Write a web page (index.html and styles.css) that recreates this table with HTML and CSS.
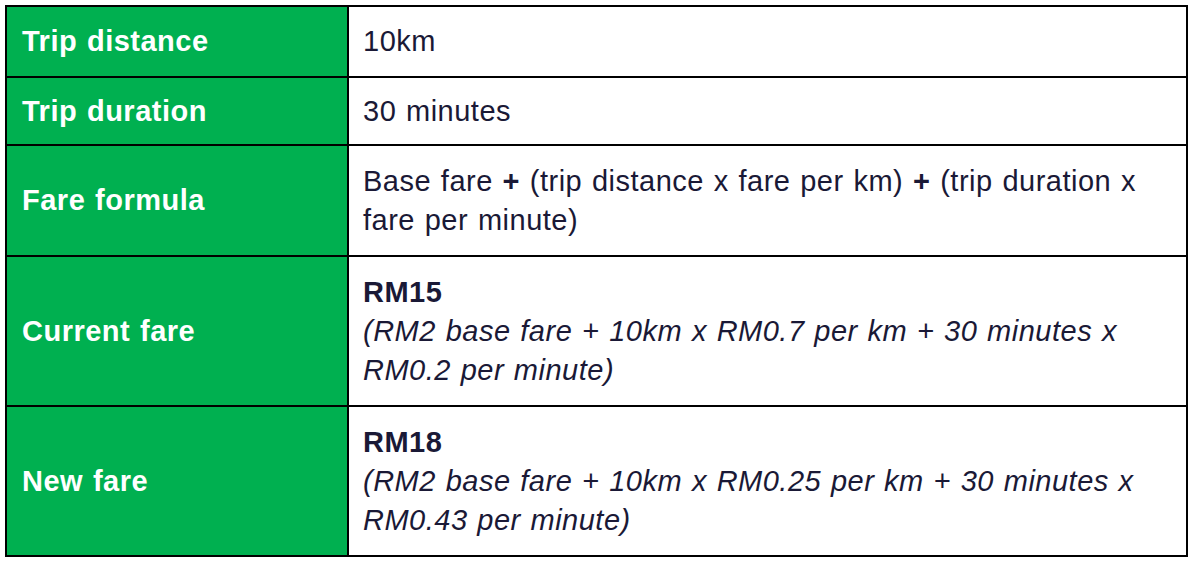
FILE: index.html
```html
<!DOCTYPE html>
<html>
<head>
<meta charset="utf-8">
<link rel="stylesheet" href="styles.css">
</head>
<body>
<table class="fares">
  <tr class="r1">
    <th>Trip distance</th>
    <td>10km</td>
  </tr>
  <tr class="r2">
    <th>Trip duration</th>
    <td>30 minutes</td>
  </tr>
  <tr class="r3">
    <th>Fare formula</th>
    <td>Base fare <b>+</b> (trip distance x fare per km) <b>+</b> (trip duration x fare per minute)</td>
  </tr>
  <tr class="r4">
    <th>Current fare</th>
    <td><b class="amt">RM15</b><br><i>(RM2 base fare + 10km x RM0.7 per km + 30 minutes x RM0.2 per minute)</i></td>
  </tr>
  <tr class="r5">
    <th>New fare</th>
    <td><b class="amt">RM18</b><br><i>(RM2 base fare + 10km x RM0.25 per km + 30 minutes x RM0.43 per minute)</i></td>
  </tr>
</table>
</body>
</html>
```
FILE: styles.css
```css
html, body {
  margin: 0;
  padding: 0;
  background: #ffffff;
}
body {
  padding: 5px 0 0 5px;
  font-family: "Liberation Sans", Arial, sans-serif;
}
.fares {
  border-collapse: collapse;
  width: 1183px;
  table-layout: fixed;
}
.fares th, .fares td {
  border: 2px solid #000;
  font-size: 29px;
  line-height: 39px;
  letter-spacing: 0.5px;
  word-spacing: 1.2px;
  vertical-align: middle;
  text-align: left;
}
.fares th {
  width: 325px;
  background: #00b050;
  color: #fff;
  font-weight: bold;
  padding: 0 0 0 15px;
}
.fares td {
  color: #1a1936;
  padding: 0 20px 0 14px;
}
.fares b { font-weight: bold; }
.r1 { height: 71px; }
.r2 { height: 68px; }
.r3 { height: 111px; }
.r4 { height: 150px; }
.r5 { height: 150px; }
```
